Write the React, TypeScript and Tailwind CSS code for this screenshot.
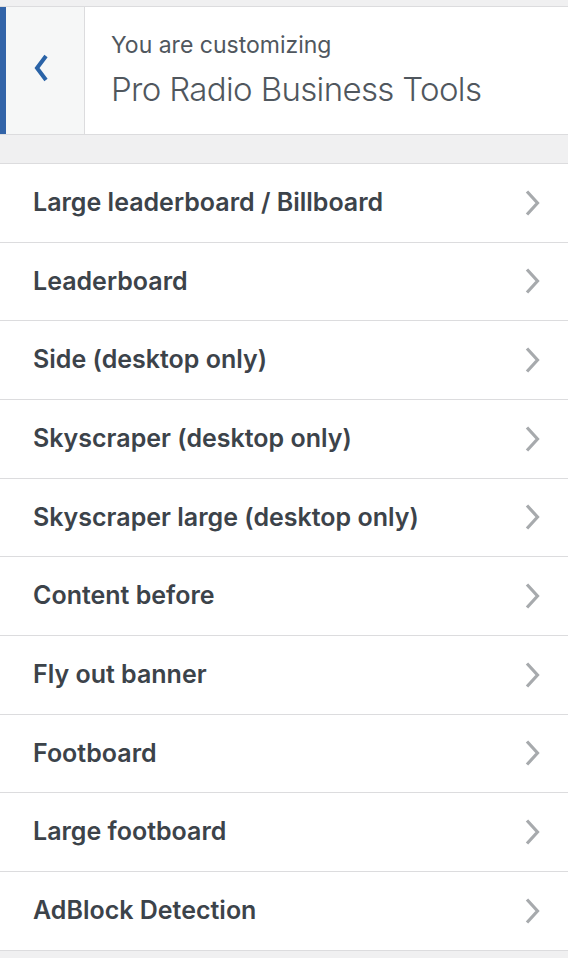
import React from "react";

const items = [
  "Large leaderboard / Billboard",
  "Leaderboard",
  "Side (desktop only)",
  "Skyscraper (desktop only)",
  "Skyscraper large (desktop only)",
  "Content before",
  "Fly out banner",
  "Footboard",
  "Large footboard",
  "AdBlock Detection",
];

export default function App() {
  return (
    <div
      className="w-[568px] h-[958px] bg-[#f0f0f1] overflow-hidden"
      style={{ fontFamily: "Inter, 'Noto Sans', sans-serif" }}
    >
      <div className="h-[6px]" />
      <div className="flex h-[129px] border-y border-[#dcdcde] bg-white">
        <div className="w-[6px] bg-[#3264a8]" />
        <button className="w-[79px] flex items-center justify-center bg-[#f6f7f7] border-r border-[#dcdcde]">
          <svg width="18" height="28" viewBox="0 0 18 28" className="-ml-[8px] -mt-[6px]">
            <path d="M14 2 L5 14 L14 26" fill="none" stroke="#2a63a7" strokeWidth="4" strokeLinejoin="miter" />
          </svg>
        </button>
        <div className="flex flex-col pl-[26px] pt-[24px]">
          <div className="text-[23px] leading-[28px] text-[#50575e]">You are customizing</div>
          <div className="text-[33px] leading-[40px] font-light tracking-[-0.65px] text-[#50575e] mt-[10px]">
            Pro Radio Business Tools
          </div>
        </div>
      </div>
      <div className="h-[28px]" />
      <div className="border-t border-[#dcdcde]">
        {items.map((t) => (
          <div
            key={t}
            className="h-[78.67px] flex items-center justify-between bg-white border-b border-[#dcdcde] pl-[33px] pr-[26px]"
          >
            <span className="text-[25px] font-semibold text-[#3c434a]">{t}</span>
            <svg width="18" height="26" viewBox="0 0 18 26">
              <path d="M3 1.5 L13.5 13 L3 24.5" fill="none" stroke="#a7aaad" strokeWidth="3.2" />
            </svg>
          </div>
        ))}
      </div>
    </div>
  );
}
